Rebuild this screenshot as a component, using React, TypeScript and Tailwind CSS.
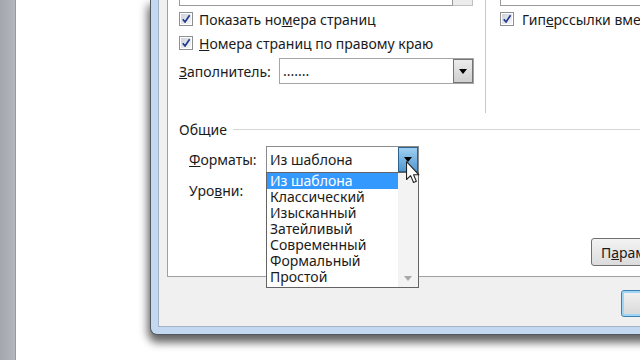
import React from 'react';

const Check = () => (
  <span className="flex-none w-[14px] h-[14px] border border-[#8e8f8f] bg-white p-[1px]">
    <span className="relative block w-full h-full bg-gradient-to-br from-[#cdd2da] to-[#f7f7f7]">
      <svg viewBox="0 0 10 10" className="absolute inset-0 w-full h-full">
        <path d="M1.8 5.2 L4 8 L8.6 1.2" fill="none" stroke="#23388f" strokeWidth="1.7" strokeLinejoin="round" />
      </svg>
    </span>
  </span>
);

const Arrow = ({ color = '#000' }: { color?: string }) => (
  <svg viewBox="0 0 8 5" className="w-[8px] h-[5px]">
    <path d="M0 0 H8 L4 5 Z" fill={color} />
  </svg>
);

const items = ['Из шаблона', 'Классический', 'Изысканный', 'Затейливый', 'Современный', 'Формальный', 'Простой'];

export default function App() {
  return (
    <div className="w-[640px] h-[360px] overflow-hidden flex bg-white text-[14px] text-[#1b1b1b] font-['Noto_Sans','Liberation_Sans',sans-serif]">
      {/* document page behind */}
      <div className="flex-none w-[16px] bg-gradient-to-r from-[#a3a7ad] to-[#b4b8bd] border-r border-[#969aa0]" />
      <div className="flex-none w-[134px] bg-white" />

      {/* dialog window */}
      <div className="flex-none w-[620px] h-[335px] bg-[#c3d9f1] border-l border-b border-[#555a61] rounded-bl-[7px] pl-[7px] pb-[7px] shadow-[-3px_4px_10px_rgba(0,0,0,0.35),0_8px_8px_rgba(0,0,0,0.45)]">
        <div className="h-full bg-[#f0f0f0] border-l border-b border-[#a3b3c4] pl-[8px] flex flex-col">
          {/* tab panel */}
          <div className="relative h-[277px] bg-white border-l border-b border-[#a0a0a0] flex flex-col">
            <div className="flex h-[113px]">
              <div className="flex-none w-[318px] border-r border-[#c8c8c8] pl-[11px] flex flex-col">
                <div className="flex h-[6px]">
                  <div className="w-[274px] border-x border-b border-[#9a9a9a]" />
                  <div className="w-[20px] border-r border-b border-[#c2c2c2] bg-[#ececec]" />
                </div>
                <div className="mt-[6px] h-[14px] flex items-center gap-[6px] whitespace-nowrap">
                  <Check />
                  <span>Показать но<span className="underline">м</span>ера страниц</span>
                </div>
                <div className="mt-[10px] h-[14px] flex items-center gap-[6px] whitespace-nowrap">
                  <Check />
                  <span><span className="underline">Н</span>омера страниц по правому краю</span>
                </div>
                <div className="mt-[8px] h-[26px] flex items-center">
                  <span className="w-[100px]"><span className="underline">З</span>аполнитель:</span>
                  <div className="w-[195px] h-[26px] border border-[#a5a5a5] bg-white flex items-center">
                    <span className="flex-1 pl-[3px] leading-none">.......</span>
                    <div className="w-[20px] h-[24px] border border-[#747474] bg-gradient-to-b from-[#ececec] to-[#cfcfcf] flex items-center justify-center">
                      <Arrow />
                    </div>
                  </div>
                </div>
              </div>
              <div className="flex-1 pl-[14px] flex flex-col">
                <div className="h-[6px] border-l border-b border-[#9a9a9a]" />
                <div className="mt-[6px] h-[14px] flex items-center gap-[8px] whitespace-nowrap">
                  <Check />
                  <span>Гип<span className="underline">е</span>рссылки вместо номеров страниц</span>
                </div>
              </div>
            </div>

            {/* Общие */}
            <div className="mt-[8px] h-[16px] pl-[11px] flex items-center">
              <span>Общие</span>
              <div className="flex-1 ml-[6px] border-t border-[#d5d5d5]" />
            </div>
            <div className="mt-[9px] h-[27px] pl-[21px] flex items-center">
              <span className="w-[77px]"><span className="underline">Ф</span>орматы:</span>
              <div className="w-[153px] h-[27px] border border-[#8c8c8c] bg-white flex items-center">
                <span className="flex-1 pl-[3px]">Из шаблона</span>
                <div className="w-[20px] h-[25px] border border-[#2c628b] bg-gradient-to-b from-[#9fd0f1] to-[#4f97d0] flex items-center justify-center">
                  <Arrow />
                </div>
              </div>
            </div>
            <div className="mt-[9px] h-[16px] pl-[21px] flex items-center">
              <span>Уро<span className="underline">в</span>ни:</span>
            </div>
            <div className="mt-[40px] pl-[423px]">
              <div className="w-[110px] h-[28px] rounded-[3px] border border-[#707070] bg-gradient-to-b from-[#f3f3f3] to-[#dcdcdc] flex items-center pl-[9px] whitespace-nowrap">
                <span>П<span className="underline">а</span>раметры...</span>
              </div>
            </div>

            {/* open dropdown list */}
            <div className="absolute left-[98px] top-[172px] w-[153px] h-[116px] border border-[#646464] bg-white flex">
              <div className="flex-1 flex flex-col">
                {items.map((it, i) => (
                  <div
                    key={it}
                    className={`h-[16px] leading-[16px] pl-[3px] whitespace-nowrap ${i === 0 ? 'bg-[#3399ff] text-white' : ''}`}
                  >
                    {it}
                  </div>
                ))}
              </div>
              <div className="w-[20px] bg-[#f3f3f3] flex flex-col justify-end items-center pb-[6px]">
                <Arrow color="#a8a8a8" />
              </div>
            </div>

            {/* mouse cursor */}
            <svg viewBox="0 0 13 21" className="absolute left-[238px] top-[161px] w-[14px] h-[23px]">
              <path d="M0.5 0.5 V17 L4.3 13.4 L7 19.8 L9.6 18.7 L7 12.6 H12 Z" fill="#fff" stroke="#222" strokeWidth="1" strokeLinejoin="round" />
            </svg>
          </div>

          {/* bottom button strip */}
          <div className="mt-[13px] pl-[454px]">
            <div className="w-[80px] h-[27px] rounded-[3px] border border-[#3c7fb1] bg-gradient-to-b from-[#f2f2f2] to-[#d8d8d8] shadow-[inset_0_0_0_2px_#9fd6f5]" />
          </div>
        </div>
      </div>
    </div>
  );
}
